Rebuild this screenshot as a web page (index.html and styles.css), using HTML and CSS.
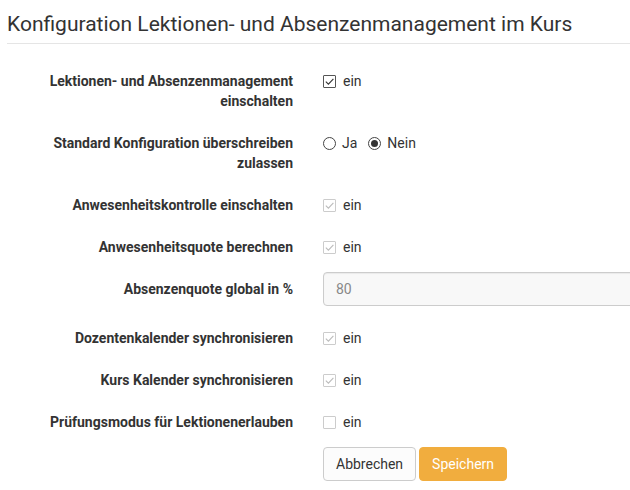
FILE: index.html
```html
<!DOCTYPE html>
<html lang="de">
<head>
<meta charset="utf-8">
<title>Konfiguration</title>
<link rel="stylesheet" href="styles.css">
</head>
<body>
<div class="page">
  <h3 class="title">Konfiguration Lektionen- und Absenzenmanagement im Kurs</h3>
  <form class="form">
    <div class="group">
      <label class="label">Lektionen- und Absenzenmanagement einschalten</label>
      <div class="control check-row">
        <span class="box"><svg viewBox="0 0 13 13" width="13" height="13"><path d="M2.8 6.6 L5.4 9.2 L10.4 3.8" fill="none" stroke="#333" stroke-width="1.1"/></svg></span>
        <span class="opt">ein</span>
      </div>
    </div>
    <div class="group">
      <label class="label">Standard Konfiguration überschreiben zulassen</label>
      <div class="control check-row">
        <span class="radio"></span><span class="opt">Ja</span>
        <span class="radio on"><span class="dot"></span></span><span class="opt">Nein</span>
      </div>
    </div>
    <div class="group">
      <label class="label">Anwesenheitskontrolle einschalten</label>
      <div class="control check-row">
        <span class="box dis"><svg viewBox="0 0 13 13" width="13" height="13"><path d="M2.8 6.6 L5.4 9.2 L10.4 3.8" fill="none" stroke="#bbb" stroke-width="1.1"/></svg></span>
        <span class="opt">ein</span>
      </div>
    </div>
    <div class="group">
      <label class="label">Anwesenheitsquote berechnen</label>
      <div class="control check-row">
        <span class="box dis"><svg viewBox="0 0 13 13" width="13" height="13"><path d="M2.8 6.6 L5.4 9.2 L10.4 3.8" fill="none" stroke="#bbb" stroke-width="1.1"/></svg></span>
        <span class="opt">ein</span>
      </div>
    </div>
    <div class="group">
      <label class="label">Absenzenquote global in %</label>
      <div class="control">
        <div class="input">80</div>
      </div>
    </div>
    <div class="group">
      <label class="label">Dozentenkalender synchronisieren</label>
      <div class="control check-row">
        <span class="box dis"><svg viewBox="0 0 13 13" width="13" height="13"><path d="M2.8 6.6 L5.4 9.2 L10.4 3.8" fill="none" stroke="#bbb" stroke-width="1.1"/></svg></span>
        <span class="opt">ein</span>
      </div>
    </div>
    <div class="group">
      <label class="label">Kurs Kalender synchronisieren</label>
      <div class="control check-row">
        <span class="box dis"><svg viewBox="0 0 13 13" width="13" height="13"><path d="M2.8 6.6 L5.4 9.2 L10.4 3.8" fill="none" stroke="#bbb" stroke-width="1.1"/></svg></span>
        <span class="opt">ein</span>
      </div>
    </div>
    <div class="group">
      <label class="label">Prüfungsmodus für Lektionenerlauben</label>
      <div class="control check-row">
        <span class="box dis"></span>
        <span class="opt">ein</span>
      </div>
    </div>
    <div class="group">
      <div class="label"></div>
      <div class="control buttons">
        <button type="button" class="btn">Abbrechen</button>
        <button type="button" class="btn primary">Speichern</button>
      </div>
    </div>
  </form>
</div>
</body>
</html>
```

FILE: styles.css
```css
html { overflow: hidden; }
body {
  margin: 0;
  font-family: Roboto, "Liberation Sans", Arial, sans-serif;
  font-size: 14px;
  line-height: 20px;
  color: #333;
  background: #fff;
}
.page {
  width: 1240px;
  padding: 0 0 0 7px;
}
.title {
  margin: 0;
  padding-top: 10px;
  padding-bottom: 5px;
  font-size: 21px;
  font-weight: 400;
  line-height: 28px;
  color: #333;
  border-bottom: 1px solid #e5e5e5;
}
.form {
  padding-top: 20px;
}
.group {
  display: grid;
  grid-template-columns: 286px 900px;
  column-gap: 30px;
  margin-bottom: 15px;
}
.label {
  text-align: right;
  font-weight: 700;
  padding-top: 7px;
  padding-left: 40px;
}
.check-row {
  display: flex;
  align-items: center;
  padding-top: 7px;
  height: 20px;
}
.box {
  width: 13px;
  height: 13px;
  box-sizing: border-box;
  border: 1px solid #555;
  border-radius: 1px;
  display: inline-block;
  position: relative;
}
.box svg { position: absolute; left: -1px; top: -1px; }
.box.dis { border-color: #ccc; }
.opt { margin-left: 7px; }
.radio {
  width: 13px;
  height: 13px;
  box-sizing: border-box;
  border: 1px solid #444;
  border-radius: 50%;
  display: inline-flex;
  align-items: center;
  justify-content: center;
}
.radio + .opt { margin-left: 6px; margin-right: 11px; }
.radio.on .dot {
  width: 7px;
  height: 7px;
  border-radius: 50%;
  background: #333;
}
.input {
  height: 34px;
  box-sizing: border-box;
  border: 1px solid #ccc;
  border-radius: 4px;
  background: #f8f8f8;
  padding: 6px 12px;
  color: #888;
  box-shadow: inset 0 1px 1px rgba(0,0,0,0.06);
}
.buttons { display: flex; gap: 3px; }
.btn {
  font-family: inherit;
  font-size: 14px;
  line-height: 20px;
  height: 34px;
  padding: 6px 12px;
  border: 1px solid #ccc;
  border-radius: 4px;
  background: #fcfcfc;
  color: #333;
}
.btn.primary {
  background: #f1ad3e;
  border-color: #f1ad3e;
  color: #fff;
}
```
